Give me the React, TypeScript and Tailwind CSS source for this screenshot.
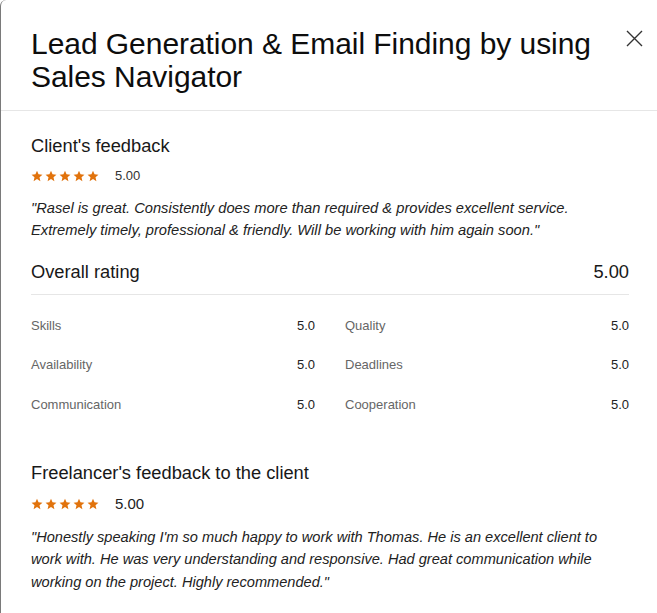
const font = { fontFamily: '"Liberation Sans", Arial, sans-serif' };

function Stars() {
  return (
    <div className="flex gap-[2px]">
      {[0, 1, 2, 3, 4].map((i) => (
        <svg key={i} width="12" height="12" viewBox="0 0 24 24" fill="#e1730d">
          <path d="M12 1.5l3.1 7.2 7.8.7-5.9 5.2 1.8 7.7L12 18.2l-6.8 4.1 1.8-7.7L1.1 9.4l7.8-.7z" />
        </svg>
      ))}
    </div>
  );
}

const scores = [
  ["Skills", "5.0", "Quality", "5.0"],
  ["Availability", "5.0", "Deadlines", "5.0"],
  ["Communication", "5.0", "Cooperation", "5.0"],
];

export default function App() {
  return (
    <div style={font} className="w-[657px] h-[613px] bg-white border-l border-[#7a7a7a] rounded-tl-md overflow-hidden text-[#181818]">
      <div className="flex justify-between items-start pl-[30px] pr-[14px] pt-[27px] pb-[17px] border-b border-[#e6e6e6]">
        <h1 className="text-[30px] leading-[33px] tracking-[-0.05px] text-[#0d0d0d]">
          Lead Generation &amp; Email Finding by using
          <br />
          Sales Navigator
        </h1>
        <button className="mt-[3px] text-[#333]">
          <svg width="17" height="17" viewBox="0 0 17 17" stroke="currentColor" strokeWidth="1.4" fill="none">
            <path d="M1 1l15 15M16 1L1 16" />
          </svg>
        </button>
      </div>

      <div className="pl-[30px] pr-[28px]">
        <h2 className="mt-[24px] text-[18.3px] leading-[22px]">Client's feedback</h2>
        <div className="flex items-center gap-[16px] mt-[9px]">
          <Stars />
          <span className="text-[13px] text-[#333]">5.00</span>
        </div>
        <p className="mt-[11px] italic text-[14.7px] leading-[22px] text-[#222]">
          "Rasel is great. Consistently does more than required &amp; provides excellent service.
          <br />
          Extremely timely, professional &amp; friendly. Will be working with him again soon."
        </p>

        <div className="flex justify-between items-center mt-[20px] pb-[11px] border-b border-[#e6e6e6]">
          <span className="text-[18.3px] leading-[22px]">Overall rating</span>
          <span className="text-[18.3px] leading-[22px]">5.00</span>
        </div>

        <div className="mt-[11px]">
          {scores.map((r) => (
            <div key={r[0]} className="grid grid-cols-2 gap-[30px] h-[39.5px] items-center text-[13px]">
              <div className="flex justify-between">
                <span className="text-[#666]">{r[0]}</span>
                <span className="text-[#222]">{r[1]}</span>
              </div>
              <div className="flex justify-between">
                <span className="text-[#666]">{r[2]}</span>
                <span className="text-[#222]">{r[3]}</span>
              </div>
            </div>
          ))}
        </div>

        <h2 className="mt-[38px] text-[18.3px] leading-[22px]">Freelancer's feedback to the client</h2>
        <div className="flex items-center gap-[16px] mt-[9px]">
          <Stars />
          <span className="text-[15px] text-[#222]">5.00</span>
        </div>
        <p className="mt-[10px] italic text-[14.6px] leading-[22.5px] text-[#222]">
          "Honestly speaking I'm so much happy to work with Thomas. He is an excellent client to work with. He was very
          understanding and responsive. Had great communication while working on the project. Highly recommended."
        </p>
      </div>
    </div>
  );
}
